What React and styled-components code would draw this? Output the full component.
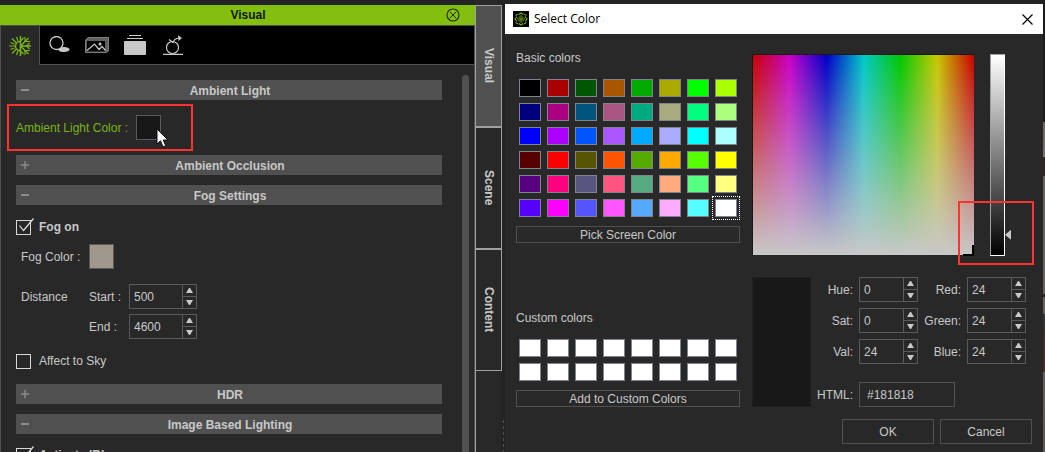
import React, { useState } from "react";
import styled, { createGlobalStyle, css } from "styled-components";

const c = {
  panel: "#282828",
  bar: "#505050",
  line: "#505050",
  text: "#c8c8c8",
  green: "#84bf10",
  greenText: "#7ab414",
  tabLine: "#a0a0a0",
  mark: "#ff3232",
};

const GlobalStyle = createGlobalStyle`
  *, *::before, *::after { box-sizing: border-box; }
  body {
    margin: 0;
    background: #232323;
    color: ${c.text};
    font: 12px/16px "Liberation Sans", Arial, sans-serif;
  }
  button, input { font: inherit; color: inherit; }
  button { padding: 0; border: 0; background: none; }
  svg { display: block; }
`;

const Desktop = styled.div`
  display: flex;
  height: 100vh;
  overflow: hidden;
`;

/* ---------- docked panel ---------- */

const Panel = styled.section`
  flex: 475 1 0;
  min-width: 0;
  display: flex;
  flex-direction: column;
  padding-top: 5px;
`;

const PanelTitle = styled.header`
  flex: none;
  display: flex;
  align-items: center;
  height: 20px;
  padding: 0 15px 0 50px;
  background: ${c.green};
  color: #101800;

  h1 {
    flex: 1;
    margin: 0;
    font-size: 12px;
    font-weight: bold;
    line-height: 20px;
    text-align: center;
  }
`;

const PanelBody = styled.div`
  flex: 1;
  min-height: 0;
  display: flex;
  flex-direction: column;
  background: ${c.panel};
  border: solid ${c.line};
  border-width: 1px 1px 0 1px;
`;

const ToolTabs = styled.nav`
  flex: none;
  display: flex;
  height: 39px;
  background: #000;

  &::after {
    content: "";
    flex: 1;
    border-bottom: 1px solid ${c.line};
  }
`;

const ToolTab = styled.button`
  width: 38px;
  display: grid;
  place-items: center;
  border-bottom: 1px solid ${c.line};
  ${(p) =>
    p.$active &&
    css`
      width: 39px;
      background: ${c.panel};
      border-bottom: 0;
      border-right: 1px solid ${c.line};
    `}
`;

const Scroller = styled.div`
  flex: 1;
  min-height: 0;
  display: flex;
  gap: 20px;
  padding: 10px 5px 0 15px;
  overflow: hidden;
`;

const Sections = styled.div`
  flex: 1;
  padding-top: 5px;
`;

const ScrollThumb = styled.div`
  width: 7px;
  border-radius: 4px 4px 0 0;
  background: ${c.bar};
`;

const SectionBar = styled.button`
  display: grid;
  grid-template-columns: 18px 1fr 16px;
  align-items: center;
  width: 100%;
  height: 20px;
  margin-bottom: ${(p) => (p.$open ? "0" : "10px")};
  background: ${c.bar};
  font-weight: bold;

  svg { justify-self: center; }
  span { padding-top: 2px; }
`;

const AmbientRow = styled.div`
  position: relative;
  display: flex;
  align-items: center;
  gap: 8px;
  height: 55px;
  color: ${c.greenText};
`;

const Highlight = styled.div`
  position: absolute;
  border: 2px solid ${c.mark};
  pointer-events: none;
`;

const AmbientHighlight = styled(Highlight)`
  inset: 4px auto 4px -9px;
  width: 186px;
`;

const Well = styled.button`
  position: relative;
  width: 25px;
  height: 25px;
  border: 1px solid #5a5a5a;
  background: ${(p) => p.$color};
`;

const Cursor = styled.svg`
  position: absolute;
  left: 19px;
  top: 12px;
`;

const FogBlock = styled.div`
  display: flex;
  flex-direction: column;
  gap: 15px;
  padding: 15px 0;
`;

const FogTop = styled.div`
  display: flex;
  flex-direction: column;
  gap: 9px;
`;

const FogGrid = styled.div`
  display: grid;
  grid-template-columns: 68px 40px 68px;
  row-gap: 5px;
  align-items: center;
  padding-left: 5px;

  label { grid-column: 2; }
  label:first-child { grid-column: 1; }
`;

const CheckLabel = styled.label`
  display: flex;
  align-items: center;
  gap: 8px;
  height: 15px;
  line-height: 15px;
  font-weight: ${(p) => (p.$strong ? "bold" : "normal")};
`;

const CheckBox = styled.span`
  position: relative;
  width: 15px;
  height: 15px;

  input {
    appearance: none;
    display: block;
    width: 15px;
    height: 15px;
    margin: 0;
    border: 1px solid #d8d8d8;
  }
  svg {
    position: absolute;
    left: 2px;
    top: -2px;
    display: none;
    pointer-events: none;
  }
  input:checked + svg { display: block; }
`;

const LightingBlock = styled.div`
  padding-top: 14px;
`;

/* ---------- side tabs ---------- */

const SideTabs = styled.nav`
  flex: none;
  width: 30px;
  padding: 5px 3px 0 0;
  background:
    repeating-linear-gradient(180deg, #505050 0 3px, transparent 3px 6px) 28px 100% / 1px 32px no-repeat,
    linear-gradient(90deg, ${c.panel} 24px, #222 30px);
  display: flex;

  > div {
    flex: 1;
    border-left: 1px solid ${c.tabLine};
  }
`;

const SideTab = styled.button`
  display: block;
  width: 100%;
  height: 122px;
  border: solid ${c.tabLine};
  border-width: 0 1px 2px 0;
  background: ${(p) => (p.$active ? c.bar : "transparent")};
  font-weight: bold;

  span { display: block; margin: auto; writing-mode: vertical-rl; }
  &:first-child { height: 123px; border-top-width: 1px; }
  &:last-child { height: 121px; border-bottom-width: 1px; }
`;

/* ---------- spin box ---------- */

const SpinFrame = styled.span`
  display: flex;
  height: 25px;
  border: 1px solid #5a5a5a;

  input {
    flex: 1;
    min-width: 0;
    padding: 0 0 0 4px;
    border: 0;
    outline: 0;
    background: none;
  }
`;

const SpinButtons = styled.span`
  flex: none;
  display: flex;
  flex-direction: column;
  width: 14px;
  border-left: 1px solid #5a5a5a;

  button {
    flex: 1;
    display: grid;
    place-items: center;
  }
  button + button { border-top: 1px solid #5a5a5a; }
`;

/* ---------- dialog ---------- */

const Dialog = styled.section`
  flex: 538 1 0;
  min-width: 0;
  margin-top: 4px;
  background: ${c.panel};
`;

const DialogTitle = styled.header`
  display: flex;
  align-items: center;
  gap: 5px;
  height: 30px;
  padding: 0 10px 0 8px;
  background: #fff;
  color: #000;

  h2 {
    flex: 1;
    margin: 0;
    font: 12px/16px "Open Sans", "Noto Sans", sans-serif;
  }
`;

const DialogBody = styled.div`
  display: grid;
  grid-template-columns: minmax(0, 224fr) minmax(0, 280fr);
  column-gap: 12px;
  padding: 16px 11px 8px;
`;

const Swatches = styled.div`
  display: grid;
  grid-template-columns: repeat(8, 22px);
  justify-content: space-between;
  row-gap: 6px;
  padding: 13px 3px 9px;
`;

const Swatch = styled.button`
  height: 18px;
  border: 1px solid #80848c;
  background: ${(p) => p.$color};
  ${(p) =>
    p.$selected &&
    css`
      outline: 1px dotted #fff;
      outline-offset: 2px;
    `}
`;

const Button = styled.button`
  width: ${(p) => (p.$wide ? "100%" : "92px")};
  height: ${(p) => (p.$wide ? "17px" : "25px")};
  line-height: 16px;
  border: 1px solid #505050;
  display: block;
`;

const CustomColors = styled.div`
  padding-top: 67px;
`;

const PickerColumn = styled.div`
  padding-top: 4px;
`;

const Picker = styled.div`
  position: relative;
  display: flex;
  align-items: flex-start;
  gap: 16px;
  padding-right: 21px;
  margin-bottom: 19px;
`;

const HueField = styled.div`
  position: relative;
  flex: 1;
  height: 202px;
  border: solid #181818;
  border-width: 1px 0 0 1px;
  border-bottom: 1px solid ${c.panel};
  background: linear-gradient(180deg, rgba(200, 200, 200, 0), rgb(200, 200, 200)),
    linear-gradient(90deg, #c80000, #c800c8, #0000c8, #00c8c8, #00c800, #c8c800, #c80000);
  background-clip: padding-box;

  &::after {
    content: "";
    position: absolute;
    right: 0;
    bottom: -1px;
    width: 11px;
    height: 11px;
    border: solid #000;
    border-width: 0 2px 2px 0;
  }
`;

const ValueSlider = styled.label`
  display: flex;
  height: 204px;
`;

const ValueBar = styled.span`
  width: 15px;
  height: 202px;
  border: 1px solid;
  border-color: #a0a0a0 #fff #fff #a0a0a0;
  background: linear-gradient(180deg, #fff, #000);
`;

const ValueRange = styled.input`
  appearance: none;
  writing-mode: vertical-lr;
  direction: rtl;
  width: 6px;
  height: 204px;
  margin: 0;
  background: none;

  &::-webkit-slider-thumb {
    appearance: none;
    width: 6px;
    height: 10px;
    background: ${c.text};
    clip-path: polygon(0 50%, 100% 0, 100% 100%);
  }
`;

const ValueHighlight = styled(Highlight)`
  top: 147px;
  right: -2px;
  width: 76px;
  height: 64px;
`;

const Values = styled.div`
  display: grid;
  grid-template-columns: 59px minmax(36px, 1fr) 59px 37px 59px;
  column-gap: 6px;
  padding-right: 6px;
`;

const Preview = styled.div`
  border: 1px solid #202020;
  background: #181818;
`;

const Fields = styled.div`
  grid-column: 2 / -1;
  display: grid;
  grid-template-columns: subgrid;
  row-gap: 6px;
  align-items: center;

  label { text-align: right; white-space: nowrap; }
`;

const HtmlInput = styled.input`
  grid-column: span 2;
  width: 96px;
  height: 25px;
  padding: 0 7px;
  margin-top: 12px;
  border: 1px solid #505050;
  background: none;
`;

const HtmlLabel = styled.label`
  padding-top: 12px;
`;

const Actions = styled.div`
  display: flex;
  justify-content: flex-end;
  gap: 6px;
  padding-top: 12px;
`;

const SceneEdge = styled.div`
  flex: none;
  width: 2px;
  background: linear-gradient(
    180deg,
    #1c1c1c 122px, #6b6663 122px, #777370 157px,
    #32251f 157px, #32251f 176px, #67605c 176px, #67605c 294px,
    #222 294px, #222 297px, #67605c 297px, #67605c 314px,
    #333 314px, #4a2c20 372px, #67605c 372px, #5d5652 100%
  );
`;

/* ---------- pieces ---------- */

function Spin({ id, value, label }) {
  const [v, setV] = useState(value);
  return (
    <SpinFrame>
      <input id={id} value={v} onChange={(e) => setV(e.target.value)} />
      <SpinButtons>
        <button type="button" aria-label={`Increase ${label}`} onClick={() => setV(Number(v) + 1)}>
          <svg width="7" height="5"><path d="M3 0h1L7 5H0z" fill={c.text} /></svg>
        </button>
        <button type="button" aria-label={`Decrease ${label}`} onClick={() => setV(Number(v) - 1)}>
          <svg width="7" height="5"><path d="M0 0h7L4 5H3z" fill={c.text} /></svg>
        </button>
      </SpinButtons>
    </SpinFrame>
  );
}

function Section({ title, open }) {
  return (
    <SectionBar type="button" $open={open} aria-expanded={!!open}>
      <svg width="8" height="8" stroke="#8c8c8c" fill="none">
        {open ? <path d="M0 4h8" strokeWidth="2" /> : <path d="M0 4h8M4 0v8" strokeWidth="1.400" />}
      </svg>
      <span>{title}</span>
    </SectionBar>
  );
}

function Check({ children, checked, strong }) {
  return (
    <CheckLabel $strong={strong}>
      <CheckBox>
        <input type="checkbox" defaultChecked={checked} />
        <svg width="16" height="14" fill="none" stroke="#e0e0e0">
          <path d="M1.500 7.500L5.500 12.500L15.500 .5" strokeWidth="1.200" />
        </svg>
      </CheckBox>
      {children}
    </CheckLabel>
  );
}

const AtmosphereIcon = () => (
  <svg width="22" height="20" viewBox="0 0 22 20" fill="none" stroke={c.greenText} strokeWidth="1.200">
    <path d="M11.500 0v20" strokeWidth="1.500" />
    <path d="M12 10h10M12 9.500l7.500-7.500M12 10.500l7.500 7.500" strokeWidth="1.400" />
    <path d="M16 1v4.500h5M16 19v-4.500h5M20.500 7l-3 3 3 3M12 4.500l2.500-2.500M12 15.500l2.500 2.500" />
    <path d="M11 5.500a4.500 4.500 0 0 0 0 9" strokeWidth="1.400" />
    <path d="M0 10h6.500M3 2.500l4.500 4.500M3 17.500l4.500-4.500M7.500 1l1.500 4M7.500 19l1.500-4M1.500 6.500l4 1.500M1.500 13.500l4-1.500" />
  </svg>
);

const ShadowIcon = () => (
  <svg width="21" height="18" viewBox="0 0 21 18">
    <ellipse cx="15" cy="13.500" rx="5.500" ry="2.500" fill={c.text} />
    <circle cx="7.500" cy="7" r="6.500" fill="#000" stroke={c.text} strokeWidth="1.300" />
    <path d="M9 13.500c2 .3 3.500-.6 4.500-2h3c1.500 1-1 4.200-3 4.200s-3.500-.7-4.500-2.200z" fill={c.text} />
  </svg>
);

const ImageIcon = () => (
  <svg width="24" height="16" viewBox="0 0 24 16" fill="none">
    <path d="M3 0h21v14l-3 2H0V3z" fill="#606060" />
    <path d="M2 4h18v10.500H2z" fill="#000" />
    <path d="M.5 15.500v-12l3-3h20v13l-2.500 2z" stroke="#7c7c7c" />
    <path d="M2 13.500l7.500-6.500 4.500 5.500 3-3 3.500 4" stroke={c.text} strokeWidth="1.200" />
    <circle cx="15" cy="7" r="1.500" fill={c.text} />
  </svg>
);

const StackIcon = () => (
  <svg width="22" height="20" viewBox="0 0 22 20" fill={c.text}>
    <path d="M5 0h12v1H5zM3 3h16v1H3zM0 7q0-1 1-1h20q1 0 1 1v12q0 1-1 1H1q-1 0-1-1z" />
  </svg>
);

const MotionIcon = () => (
  <svg width="20" height="20" viewBox="0 0 20 20" fill="none" stroke={c.text} strokeWidth="1.200">
    <circle cx="9.500" cy="12.500" r="6" />
    <path d="M0 19.300h20M6 4.500l4 3q1-4 6.500-4.500" />
    <path d="M15 .2L19 3l-3.500 3z" fill={c.text} stroke="none" />
  </svg>
);

const AppIcon = () => (
  <svg width="16" height="16" viewBox="0 0 16 16" fill="none" stroke="#78aa18">
    <path d="M0 0h16v16H0z" fill="#000" stroke="none" />
    <path d="M6 3.500l2-1.500 2 1.500M12 5.500l2 2.500-2 2.500M10 12.500L8 14l-2-1.500M4 10.500L2 8l2-2.500" strokeWidth="1.200" />
    <path d="M3 5V4l2.500-1M10.500 3L13 4v1M13 11v1l-2.500 1M5.500 13L3 12v-1" />
    <path d="M8 4.500L11.500 8 8 11.500 4.500 8zM7 7h2v2H7z" />
  </svg>
);

const BASIC = [
  "#000000", "#aa0000", "#005500", "#aa5500", "#00aa00", "#aaaa00", "#00ff00", "#aaff00",
  "#00007f", "#aa007f", "#00557f", "#aa557f", "#00aa7f", "#aaaa7f", "#00ff7f", "#aaff7f",
  "#0000ff", "#aa00ff", "#0055ff", "#aa55ff", "#00aaff", "#aaaaff", "#00ffff", "#aaffff",
  "#550000", "#ff0000", "#555500", "#ff5500", "#55aa00", "#ffaa00", "#55ff00", "#ffff00",
  "#55007f", "#ff007f", "#55557f", "#ff557f", "#55aa7f", "#ffaa7f", "#55ff7f", "#ffff7f",
  "#5500ff", "#ff00ff", "#5555ff", "#ff55ff", "#55aaff", "#ffaaff", "#55ffff", "#ffffff",
];

const CHANNELS = [
  ["Hue", 0], ["Red", 24],
  ["Sat", 0], ["Green", 24],
  ["Val", 24], ["Blue", 24],
];

const TOOLS = [
  ["Atmosphere", AtmosphereIcon],
  ["Shadow", ShadowIcon],
  ["Image", ImageIcon],
  ["Layers", StackIcon],
  ["Motion", MotionIcon],
];

export default function App() {
  return (
    <Desktop>
      <GlobalStyle />
      <Panel>
        <PanelTitle>
          <h1>Visual</h1>
          <button type="button" aria-label="Close panel">
            <svg width="14" height="14" fill="none" stroke="#23340a">
              <circle cx="7" cy="7" r="6" strokeWidth="1.200" />
              <path d="M4 4l6 6M10 4l-6 6" />
            </svg>
          </button>
        </PanelTitle>
        <PanelBody>
          <ToolTabs>
            {TOOLS.map(([name, Icon], i) => (
              <ToolTab key={name} type="button" aria-label={name} $active={i === 0}>
                <Icon />
              </ToolTab>
            ))}
          </ToolTabs>
          <Scroller>
            <Sections>
              <Section title="Ambient Light" open />
              <AmbientRow>
                <label htmlFor="ambient">Ambient Light Color :</label>
                <Well id="ambient" type="button" $color="#181818">
                  <Cursor width="14" height="20" viewBox="0 0 14 20">
                    <path d="M1 1v15l3.500-3.200 2.500 6 2.700-1.100-2.500-5.700H12z" fill="#fff" stroke="#101018" />
                  </Cursor>
                </Well>
                <AmbientHighlight />
              </AmbientRow>
              <Section title="Ambient Occlusion" />
              <Section title="Fog Settings" open />
              <FogBlock>
                <FogTop>
                  <Check checked strong>Fog on</Check>
                  <FogGrid>
                    <label htmlFor="fog">Fog Color :</label>
                    <Well id="fog" type="button" $color="#a0988a" />
                  </FogGrid>
                </FogTop>
                <FogGrid>
                  <span>Distance</span>
                  <label htmlFor="start">Start :</label>
                  <Spin id="start" label="start" value={500} />
                  <label htmlFor="end">End :</label>
                  <Spin id="end" label="end" value={4600} />
                </FogGrid>
                <Check>Affect to Sky</Check>
              </FogBlock>
              <Section title="HDR" />
              <Section title="Image Based Lighting" open />
              <LightingBlock>
                <Check checked strong>Activate IBL</Check>
              </LightingBlock>
            </Sections>
            <ScrollThumb />
          </Scroller>
        </PanelBody>
      </Panel>

      <SideTabs>
        <div>
          {["Visual", "Scene", "Content"].map((t, i) => (
            <SideTab key={t} type="button" $active={i === 0}><span>{t}</span></SideTab>
          ))}
        </div>
      </SideTabs>

      <Dialog role="dialog" aria-labelledby="dialog-title">
        <DialogTitle>
          <AppIcon />
          <h2 id="dialog-title">Select Color</h2>
          <button type="button" aria-label="Close">
            <svg width="11" height="11" stroke="#000">
              <path d="M.5 .5l10 10M10.500 .5l-10 10" strokeWidth="1.200" />
            </svg>
          </button>
        </DialogTitle>
        <DialogBody>
          <div>
            <div>Basic colors</div>
            <Swatches>
              {BASIC.map((color, i) => (
                <Swatch key={color} type="button" aria-label={color} $color={color} $selected={i === 47} />
              ))}
            </Swatches>
            <Button type="button" $wide>Pick Screen Color</Button>
            <CustomColors>
              <div>Custom colors</div>
              <Swatches>
                {Array.from({ length: 16 }, (_, i) => (
                  <Swatch key={i} type="button" aria-label={`Custom ${i + 1}`} $color="#fff" />
                ))}
              </Swatches>
              <Button type="button" $wide>Add to Custom Colors</Button>
            </CustomColors>
          </div>
          <PickerColumn>
            <Picker>
              <HueField />
              <ValueSlider>
                <ValueBar />
                <ValueRange type="range" aria-label="Value" min="0" max="255" defaultValue="24" />
              </ValueSlider>
              <ValueHighlight />
            </Picker>
            <Values>
              <Preview />
              <Fields>
                {CHANNELS.map(([name, value]) => (
                  <React.Fragment key={name}>
                    <label htmlFor={name}>{name}:</label>
                    <Spin id={name} label={name} value={value} />
                  </React.Fragment>
                ))}
                <HtmlLabel htmlFor="html">HTML:</HtmlLabel>
                <HtmlInput id="html" defaultValue="#181818" />
              </Fields>
            </Values>
            <Actions>
              <Button type="button">OK</Button>
              <Button type="button">Cancel</Button>
            </Actions>
          </PickerColumn>
        </DialogBody>
      </Dialog>
      <SceneEdge />
    </Desktop>
  );
}
